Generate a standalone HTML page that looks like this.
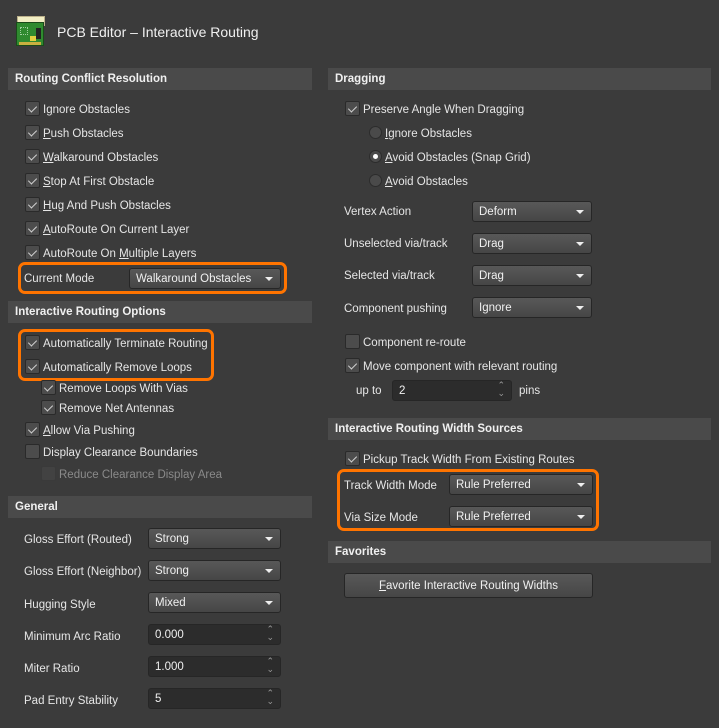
<!DOCTYPE html>
<html><head><meta charset="utf-8"><style>
*{box-sizing:border-box;margin:0;padding:0}
body{width:719px;height:728px;background:#3b3b3b;font-family:"Liberation Sans",sans-serif;font-size:11.5px;color:#e6e6e6;position:relative;overflow:hidden}
.a{position:absolute;white-space:nowrap}
.h{position:absolute;height:22px;background:#4a4a4a;font-weight:bold;font-size:11.5px;padding:5px 0 0 7px;color:#f0f0f0}
.cb{position:absolute;width:15px;height:15px;border:1px solid #2a2a2a;background:#4c4c4c;border-radius:2px}
.cb.c::after{content:"";position:absolute;left:4px;top:2px;width:4px;height:7px;border:solid #cfcfcf;border-width:0 1.3px 1.3px 0;transform:rotate(45deg)}
.cb.d{background:#424242;border-color:#3a3a3a}
.t{position:absolute;white-space:nowrap;line-height:14px;transform:translateY(1px)}
.dis{color:#8a8a8a}
.dd{position:absolute;height:21px;border:1px solid #262626;border-radius:3px;background:linear-gradient(#585858,#464646);padding:4px 0 0 6px;color:#f0f0f0}
.dd::after{content:"";position:absolute;right:7px;top:8px;border:4.5px solid transparent;border-top:4px solid #eee;border-bottom:0}
.in{position:absolute;height:21px;border:1px solid #262626;border-radius:3px;background:#2c2c2c;padding:4px 0 0 6px;color:#f0f0f0}
.in::after{content:"\2303";position:absolute;right:6px;top:0;font-size:9px;color:#999;line-height:9px}
.in::before{content:"\2304";position:absolute;right:6px;top:8px;font-size:9px;color:#999;line-height:9px}
.r{position:absolute;width:13px;height:13px;border-radius:50%;background:#4a4a4a;border:1px solid #2c2c2c}
.r.on::after{content:"";position:absolute;left:3px;top:3px;width:5px;height:5px;border-radius:50%;background:#fff}
.o{position:absolute;border:3px solid #ff7400;border-radius:7px}
u{text-decoration:underline}
</style></head><body>
<div class="a" style="left:17px;top:16px;width:28px;height:10px;background:#f2eec4;border:1px solid #bbb08a"></div>
<div class="a" style="left:16px;top:22px;width:28px;height:24px;background:#2f8a2f;border:1px solid #1a4a1a"></div>
<div class="a" style="left:20px;top:27px;width:8px;height:8px;border:1px dotted #9fd09f"></div>
<div class="a" style="left:30px;top:36px;width:6px;height:5px;background:#e0d040"></div>
<div class="a" style="left:36px;top:28px;width:5px;height:11px;background:#222"></div>
<div class="a" style="left:19px;top:42px;width:22px;height:3px;background:#c9b040"></div>
<div class="a" style="left:57px;top:24px;font-size:14px;color:#f0f0f0">PCB Editor – Interactive Routing</div>

<div class="h" style="left:8px;top:68px;width:304px">Routing Conflict Resolution</div>
<div class="cb c" style="left:25px;top:101px"></div><div class="t" style="left:43px;top:102px">I<u>g</u>nore Obstacles</div>
<div class="cb c" style="left:25px;top:125px"></div><div class="t" style="left:43px;top:126px"><u>P</u>ush Obstacles</div>
<div class="cb c" style="left:25px;top:149px"></div><div class="t" style="left:43px;top:150px"><u>W</u>alkaround Obstacles</div>
<div class="cb c" style="left:25px;top:173px"></div><div class="t" style="left:43px;top:174px"><u>S</u>top At First Obstacle</div>
<div class="cb c" style="left:25px;top:197px"></div><div class="t" style="left:43px;top:198px"><u>H</u>ug And Push Obstacles</div>
<div class="cb c" style="left:25px;top:221px"></div><div class="t" style="left:43px;top:222px"><u>A</u>utoRoute On Current Layer</div>
<div class="cb c" style="left:25px;top:245px"></div><div class="t" style="left:43px;top:246px">AutoRoute On <u>M</u>ultiple Layers</div>
<div class="o" style="left:18px;top:262px;width:269px;height:32px"></div>
<div class="t" style="left:24px;top:271px">Current Mode</div>
<div class="dd" style="left:129px;top:268px;width:152px">Walkaround Obstacles</div>

<div class="h" style="left:8px;top:301px;width:304px">Interactive Routing Options</div>
<div class="o" style="left:18px;top:329px;width:196px;height:52px"></div>
<div class="cb c" style="left:25px;top:335px"></div><div class="t" style="left:43px;top:336px">Automatically Terminate Routing</div>
<div class="cb c" style="left:25px;top:359px"></div><div class="t" style="left:43px;top:360px">Automatically Remove Loops</div>
<div class="cb c" style="left:41px;top:380px"></div><div class="t" style="left:59px;top:381px">Remove Loops With Vias</div>
<div class="cb c" style="left:41px;top:400px"></div><div class="t" style="left:59px;top:401px">Remove Net Antennas</div>
<div class="cb c" style="left:25px;top:422px"></div><div class="t" style="left:43px;top:423px"><u>A</u>llow Via Pushing</div>
<div class="cb" style="left:25px;top:444px"></div><div class="t" style="left:43px;top:445px">Display Clearance Boundaries</div>
<div class="cb d" style="left:41px;top:466px"></div><div class="t dis" style="left:59px;top:467px">Reduce Clearance Display Area</div>

<div class="h" style="left:8px;top:496px;width:304px">General</div>
<div class="t" style="left:24px;top:532px">Gloss Effort (Routed)</div><div class="dd" style="left:148px;top:528px;width:133px">Strong</div>
<div class="t" style="left:24px;top:564px">Gloss Effort (Neighbor)</div><div class="dd" style="left:148px;top:560px;width:133px">Strong</div>
<div class="t" style="left:24px;top:597px">Hugging Style</div><div class="dd" style="left:148px;top:592px;width:133px">Mixed</div>
<div class="t" style="left:24px;top:629px">Minimum Arc Ratio</div><div class="in" style="left:148px;top:624px;width:133px">0.000</div>
<div class="t" style="left:24px;top:661px">Miter Ratio</div><div class="in" style="left:148px;top:656px;width:133px">1.000</div>
<div class="t" style="left:24px;top:693px">Pad Entry Stability</div><div class="in" style="left:148px;top:688px;width:133px">5</div>

<div class="h" style="left:328px;top:68px;width:383px">Dragging</div>
<div class="cb c" style="left:345px;top:101px"></div><div class="t" style="left:363px;top:102px">Preserve Angle When Dragging</div>
<div class="r" style="left:369px;top:126px"></div><div class="t" style="left:385px;top:126px"><u>I</u>gnore Obstacles</div>
<div class="r on" style="left:369px;top:150px"></div><div class="t" style="left:385px;top:150px"><u>A</u>void Obstacles (Snap Grid)</div>
<div class="r" style="left:369px;top:174px"></div><div class="t" style="left:385px;top:174px"><u>A</u>void Obstacles</div>
<div class="t" style="left:344px;top:204px">Vertex Action</div><div class="dd" style="left:472px;top:201px;width:120px">Deform</div>
<div class="t" style="left:344px;top:236px">Unselected via/track</div><div class="dd" style="left:472px;top:233px;width:120px">Drag</div>
<div class="t" style="left:344px;top:268px">Selected via/track</div><div class="dd" style="left:472px;top:265px;width:120px">Drag</div>
<div class="t" style="left:344px;top:301px">Component pushing</div><div class="dd" style="left:472px;top:297px;width:120px">Ignore</div>
<div class="cb" style="left:345px;top:334px"></div><div class="t" style="left:363px;top:335px">Component re-route</div>
<div class="cb c" style="left:345px;top:358px"></div><div class="t" style="left:363px;top:359px">Move component with relevant routing</div>
<div class="t" style="left:356px;top:383px">up to</div><div class="in" style="left:392px;top:380px;width:120px">2</div><div class="t" style="left:519px;top:383px">pins</div>

<div class="h" style="left:328px;top:418px;width:383px">Interactive Routing Width Sources</div>
<div class="cb c" style="left:345px;top:451px"></div><div class="t" style="left:363px;top:452px">Pickup Track Width From Existing Routes</div>
<div class="o" style="left:337px;top:469px;width:262px;height:62px"></div>
<div class="t" style="left:344px;top:478px">Track Width Mode</div><div class="dd" style="left:449px;top:474px;width:144px">Rule Preferred</div>
<div class="t" style="left:344px;top:510px">Via Size Mode</div><div class="dd" style="left:449px;top:506px;width:144px">Rule Preferred</div>

<div class="h" style="left:328px;top:541px;width:383px">Favorites</div>
<div class="dd" style="left:344px;top:573px;width:249px;height:25px;text-align:center;padding:6px 0 0 0"><u>F</u>avorite Interactive Routing Widths</div>
<style>.dd[style*="249px"]::after{display:none}</style>
</body></html>
